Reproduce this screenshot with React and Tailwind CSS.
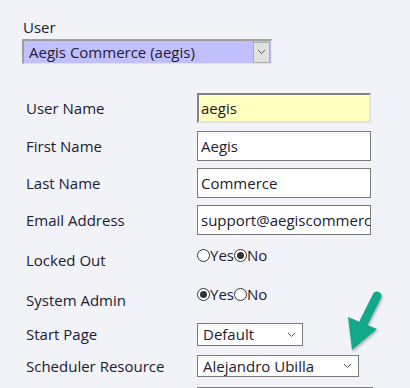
import React from 'react';

const font = { fontFamily: '"Open Sans", "Noto Sans", sans-serif' };

const Chevron = ({ className = '' }) => (
    <svg width="9" height="6" viewBox="0 0 9 6" className={className}>
        <path d="M1 1 L4.5 4.5 L8 1" fill="none" stroke="#555" strokeWidth="1" />
    </svg>
);

const Radio = ({ checked }) => (
    <span className="inline-flex w-[13px] h-[13px] rounded-full border border-[#333] bg-white items-center justify-center">
        {checked && <span className="w-[7px] h-[7px] rounded-full bg-[#333]"></span>}
    </span>
);

const Row = ({ label, className = '', children }) => (
    <div className={`flex items-center ${className}`}>
        <div className="w-[197px] pl-[26px] shrink-0">{label}</div>
        {children}
    </div>
);

const TextBox = ({ value }) => (
    <div className="w-[174px] h-[30px] border border-[#7a7a7a] bg-white flex items-center pl-[3px] overflow-hidden whitespace-nowrap">
        {value}
    </div>
);

const YesNo = ({ yes }) => (
    <div className="self-start mt-[7px] flex items-center leading-[15px]">
        <Radio checked={yes} />
        <span>Yes</span>
        <Radio checked={!yes} />
        <span>No</span>
    </div>
);

export default function App() {
    return (
        <div className="relative w-[410px] h-[388px] overflow-hidden bg-[#f1f3f8] text-[15px] text-[#1c2030]" style={font}>
            <div className="pt-[17px] pl-[23px] leading-[20px]">User</div>
            <div className="ml-[22px] mt-[2px] w-[250px] h-[25px] flex items-center bg-[#c0c0ff] border-t-2 border-l-2 border-[#a0a0a0] border-b border-r border-b-[#e4e4e4] border-r-[#e4e4e4]">
                <span className="flex-1 pl-[5px] whitespace-nowrap">Aegis Commerce (aegis)</span>
                <span className="w-[17px] h-[21px] bg-[#e1e1e1] border border-[#adadad] flex items-center justify-center mr-[1px]">
                    <Chevron />
                </span>
            </div>

            <Row label="User Name" className="mt-[29px]">
                <div className="w-[174px] h-[30px] bg-[#ffffc0] flex items-center pl-[2px] border-t-2 border-l-2 border-[#828282] border-b-2 border-r-2 border-b-[#e2e2e2] border-r-[#e2e2e2]">
                    aegis
                </div>
            </Row>
            <Row label="First Name" className="mt-[8px]">
                <TextBox value="Aegis" />
            </Row>
            <Row label="Last Name" className="mt-[7px]">
                <TextBox value="Commerce" />
            </Row>
            <Row label="Email Address" className="mt-[7px]">
                <TextBox value="support@aegiscommerce.com" />
            </Row>
            <Row label="Locked Out" className="mt-[6px] h-[39px]">
                <YesNo yes={false} />
            </Row>
            <Row label="System Admin" className="h-[40px]">
                <YesNo yes={true} />
            </Row>
            <Row label="Start Page" className="mt-[3px]">
                <div className="w-[106px] h-[23px] bg-white border border-[#7a7a7a] flex items-center pl-[5px] pr-[6px]">
                    <span className="flex-1">Default</span>
                    <Chevron />
                </div>
            </Row>
            <Row label="Scheduler Resource" className="mt-[9px]">
                <div className="w-[162px] h-[22px] bg-white border border-[#7a7a7a] flex items-center pl-[5px] pr-[6px]">
                    <span className="flex-1 whitespace-nowrap">Alejandro Ubilla</span>
                    <Chevron />
                </div>
            </Row>
            <Row label="" className="mt-[9px]">
                <div className="w-[176px] h-[24px] bg-white border border-[#7a7a7a]"></div>
            </Row>

            <svg className="absolute left-[340px] top-[285px] drop-shadow-[1px_2px_1px_rgba(0,0,0,0.25)]" width="50" height="75" viewBox="340 285 50 75">
                <line x1="377" y1="296" x2="364" y2="322" stroke="#12a88a" strokeWidth="9" strokeLinecap="round" />
                <polygon points="348,317 377,329 352,350" fill="#12a88a" />
            </svg>
        </div>
    );
}
